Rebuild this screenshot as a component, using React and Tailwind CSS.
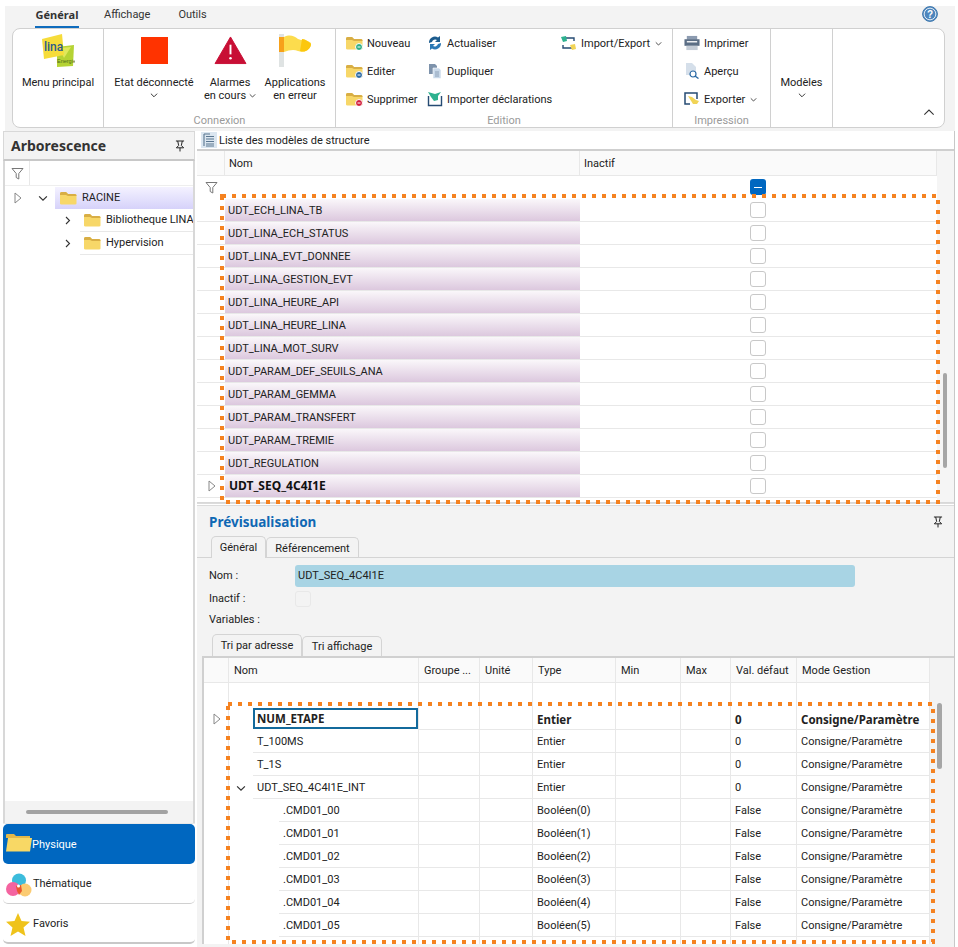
import React from "react";

const Folder = ({ className = "w-[17px] h-[14px] shrink-0", badge }) => (
  <svg viewBox="0 0 17 14" className={className}>
    <path d="M0 2.5 Q0 1 1.5 1 H6 L8 3 H15 Q16.5 3 16.5 4.5 V12.5 Q16.5 13.5 15 13.5 H1.5 Q0 13.5 0 12.5 Z" fill="#f7d768" />
    <path d="M0 2.5 Q0 1 1.5 1 H6 L8 3 H15 Q16.5 3 16.5 4.5 V5 H8 L6 4 H0 Z" fill="#d8ae45" />
    {badge && <circle cx="13" cy="11" r="3.5" fill={badge} stroke="#fff" strokeWidth="1" />}
    {badge && <path d="M11.5 11 H14.5" stroke="#fff" strokeWidth="1" />}
  </svg>
);

const Chevron = ({ className = "w-[9px] h-[9px]", dir = "down", sw = 1.1 }) => {
  const d = { down: "M1 3 L4.5 6.5 L8 3", up: "M1 6.5 L4.5 3 L8 6.5", right: "M3 1 L6.5 4.5 L3 8" }[dir];
  return (
    <svg viewBox="0 0 9 9" className={className}>
      <path d={d} fill="none" stroke="#333" strokeWidth={sw} />
    </svg>
  );
};

const Tri = () => (
  <svg viewBox="0 0 8 12" className="w-[8px] h-[12px]">
    <path d="M1 1 L7 6 L1 11 Z" fill="#fff" stroke="#888" strokeWidth="1" />
  </svg>
);

const Funnel = () => (
  <svg viewBox="0 0 13 13" className="w-[13px] h-[13px]">
    <path d="M1 1.5 H12 L7.8 6.5 V12 L5.2 10.5 V6.5 Z" fill="#fff" stroke="#777" strokeWidth="1" />
  </svg>
);

const Pin = () => (
  <svg viewBox="0 0 11 13" className="w-[10px] h-[12px]">
    <path d="M1 1 H10 M3 1 L4 6 L1.5 8.5 H9.5 L7 6 L8 1 M5.5 8.5 V12.5" fill="none" stroke="#222" strokeWidth="1.1" />
  </svg>
);

const Check = ({ light }) => (
  <span className={`block w-[16px] h-[16px] rounded-[3px] border ${light ? "border-[#e8e8e8]" : "border-[#c8c8c8] bg-white"}`} />
);

const LinaLogo = () => (
  <svg viewBox="0 0 34 34" className="w-[34px] h-[34px]">
    <path d="M16 13 L33 11 L32 32 L16 33 Z" fill="#b5d334" />
    <path d="M18 14 L30 13 L23 24 Z" fill="#dfe85b" />
    <path d="M1 5 L21 0 L23 21 L3 25 Z" fill="#f6dc3a" />
    <text x="3" y="17" fontSize="12" fontWeight="500" fill="#2a5a8c" fontFamily="Roboto, sans-serif">lina</text>
    <text x="16" y="29" fontSize="5.5" fill="#4f6b1a" fontFamily="Liberation Sans, sans-serif">Energie</text>
  </svg>
);

const AlarmIcon = () => (
  <svg viewBox="0 0 34 30" className="w-[33px] h-[29px]">
    <path d="M17 1 L33 28.5 H1 Z" fill="#c80f35" stroke="#c80f35" strokeLinejoin="round" />
    <path d="M17 9 V19" stroke="#fff" strokeWidth="2" />
    <circle cx="17" cy="23" r="1.3" fill="#fff" />
  </svg>
);

const FlagIcon = () => (
  <svg viewBox="0 0 34 34" className="w-[34px] h-[34px]">
    <rect x="1" y="1" width="5" height="33" fill="#dfe3e3" />
    <path d="M1 4 H6 V19 H1 Z" fill="#f7a11a" />
    <path d="M6 4 C12 1 16 3 20 6 C24 8 28 6 33 10 V13 C30 18 25 20 20 18 C16 16 11 17 6 19 Z" fill="#fcdc4d" />
    <path d="M24 6 C27 6 30 8 33 11 C32 17 27 20 22 18 Z" fill="#fcc70d" />
  </svg>
);

const RefreshIcon = () => (
  <svg viewBox="0 0 16 16" className="w-[16px] h-[16px]">
    <path d="M2 8 A6 6 0 0 1 11 2.5 L13 1 V7 H8 L10 5 A3.5 3.5 0 0 0 5 7 Z" fill="#1c5c8e" />
    <path d="M14 8 A6 6 0 0 1 5 13.5 L3 15 V9 H8 L6 11 A3.5 3.5 0 0 0 11 9 Z" fill="#2a78b5" />
  </svg>
);

const DupIcon = () => (
  <svg viewBox="0 0 16 16" className="w-[16px] h-[16px]">
    <path d="M2 1 H8 L10 3 V11 H2 Z" fill="#7d92ab" />
    <path d="M6 5 H12 L14 7 V15.5 H6 Z" fill="#c9d9ea" stroke="#fff" strokeWidth=".6" />
    <path d="M8 9 H12 M8 11 H12 M8 13 H12" stroke="#7d92ab" strokeWidth=".8" />
  </svg>
);

const ImportDeclIcon = () => (
  <svg viewBox="0 0 16 16" className="w-[16px] h-[16px]">
    <path d="M1.5 5 V14.5 H14.5 V5" fill="none" stroke="#264b73" strokeWidth="1.4" />
    <path d="M1 1 L8 3 L14 1 L11 5 V9 L7 10 L4 6 Z" fill="#2eb18f" />
  </svg>
);

const ImpExpIcon = () => (
  <svg viewBox="0 0 17 16" className="w-[17px] h-[16px]">
    <path d="M5 3 H14 V6 M12 13 H3 V10" fill="none" stroke="#264b73" strokeWidth="1.4" />
    <path d="M1 2 L6 1 L7 6 L3 7 Z" fill="#2eb18f" />
    <path d="M10 10 L15 9 L16 14 L12 15 Z" fill="#f1d456" />
  </svg>
);

const PrintIcon = () => (
  <svg viewBox="0 0 17 16" className="w-[16px] h-[16px]">
    <rect x="3" y="0.5" width="11" height="4" fill="#8c9bb0" />
    <rect x="0.5" y="4" width="16" height="7" fill="#5b6e85" />
    <rect x="3" y="6" width="11" height="1.4" fill="#fff" />
    <rect x="2.5" y="11" width="12" height="4.5" fill="#c4ccd6" />
  </svg>
);

const PreviewIcon = () => (
  <svg viewBox="0 0 16 16" className="w-[16px] h-[16px]">
    <path d="M2 0 H8 L12 4 V12 H2 Z" fill="#d5dfea" />
    <circle cx="9" cy="11" r="3" fill="#fff" stroke="#2c6aa5" strokeWidth="1.2" />
    <path d="M11 13 L14.5 15.5" stroke="#2c6aa5" strokeWidth="1.4" />
  </svg>
);

const ExportIcon = () => (
  <svg viewBox="0 0 17 16" className="w-[17px] h-[16px]">
    <path d="M14 8 V2 H2 V13 H7" fill="none" stroke="#264b73" strokeWidth="1.5" />
    <path d="M5 5 L9 6 L13 9 L16 10 L14 13 L10 13 Z" fill="#f1d456" />
  </svg>
);

const ListIcon = () => (
  <span className="w-[16px] h-[16px] bg-[#dbe6f0] flex items-center justify-center shrink-0">
    <svg viewBox="0 0 12 14" className="w-[12px] h-[14px]">
      <path d="M1 1 H7 M3 3.5 H11 M3 6 H11 M3 8.5 H11 M3 11 H11 M3 13 H11 M1 1 V13" stroke="#5a7690" strokeWidth="1.1" fill="none" />
    </svg>
  </span>
);

const HelpIcon = () => (
  <svg viewBox="0 0 16 16" className="w-[16px] h-[16px]">
    <circle cx="8" cy="8" r="7.4" fill="#5b8fc2" stroke="#3b76ad" />
    <circle cx="8" cy="8" r="5.8" fill="#4d86bd" stroke="#fff" strokeWidth=".8" />
    <text x="8" y="11.6" textAnchor="middle" fontSize="10" fontWeight="700" fill="#fff" fontFamily="Liberation Sans, sans-serif">?</text>
  </svg>
);

const ThemeIcon = () => (
  <svg viewBox="0 0 26 24" className="w-[26px] h-[24px]">
    <circle cx="13" cy="7.5" r="7" fill="#3cbcdc" />
    <circle cx="7" cy="16" r="7" fill="#f464a0" />
    <circle cx="19" cy="17" r="6.5" fill="#fbcb72" />
    <path d="M10 13 L15 12 L16 18 L13 22 L11 18 Z" fill="#e9562f" />
    <circle cx="12.5" cy="13" r="1.5" fill="#fff" />
  </svg>
);

const StarIcon = () => (
  <svg viewBox="0 0 24 23" className="w-[24px] h-[23px]">
    <path d="M12 0 L15.5 8 L24 8.7 L17.5 14.4 L19.5 23 L12 18.5 L4.5 23 L6.5 14.4 L0 8.7 L8.5 8 Z" fill="#efc31b" />
  </svg>
);

const SmallBtn = ({ icon, label, caret }) => (
  <div className="h-[28px] flex items-center gap-[4px] whitespace-nowrap">
    <span className="w-[17px] flex justify-center shrink-0">{icon}</span>
    <span className="pt-[2px]">{label}</span>
    {caret && <Chevron className="w-[7px] h-[7px] ml-[1px]" />}
  </div>
);

const Group = ({ w, label, children, last }) => (
  <div className={`${w} shrink-0 flex flex-col h-full ${last ? "" : "border-r border-[#d0d0d0]"}`}>
    <div className="flex-1 min-h-0">{children}</div>
    <div className="h-[14px] text-center text-[#9a9a9a] leading-[15px]">{label}</div>
  </div>
);

const BigBtn = ({ w, icon, children }) => (
  <div className={`${w} shrink-0 flex flex-col items-center`}>
    <div className="h-[40px] mt-[1px] flex items-center justify-center">{icon}</div>
    <div className="mt-[6px] text-center leading-[13px] whitespace-nowrap">{children}</div>
  </div>
);

const upper = ["UDT_ECH_LINA_TB","UDT_LINA_ECH_STATUS","UDT_LINA_EVT_DONNEE","UDT_LINA_GESTION_EVT","UDT_LINA_HEURE_API","UDT_LINA_HEURE_LINA","UDT_LINA_MOT_SURV","UDT_PARAM_DEF_SEUILS_ANA","UDT_PARAM_GEMMA","UDT_PARAM_TRANSFERT","UDT_PARAM_TREMIE","UDT_REGULATION","UDT_SEQ_4C4I1E"];

const upperCols = "w-[740px] grid grid-cols-[28px_355px_357px]";
const lowerCols = "w-[726px] grid grid-cols-[25px_190px_61px_53px_83px_65px_50px_66px_133px]";
const lower = [
  { n: "NUM_ETAPE", t: "Entier", v: "0", b: true, sel: true },
  { n: "T_100MS", t: "Entier", v: "0" },
  { n: "T_1S", t: "Entier", v: "0" },
  { n: "UDT_SEQ_4C4I1E_INT", t: "Entier", v: "0", open: true },
  { n: ".CMD01_00", t: "Booléen(0)", v: "False", sub: true },
  { n: ".CMD01_01", t: "Booléen(1)", v: "False", sub: true },
  { n: ".CMD01_02", t: "Booléen(2)", v: "False", sub: true },
  { n: ".CMD01_03", t: "Booléen(3)", v: "False", sub: true },
  { n: ".CMD01_04", t: "Booléen(4)", v: "False", sub: true },
  { n: ".CMD01_05", t: "Booléen(5)", v: "False", sub: true },
  { n: "", t: "", v: "", sub: true },
];

const Annot = ({ x, y, w, h }) => (
  <svg className="absolute pointer-events-none" style={{ left: x, top: y }} width={w + 6} height={h + 6}>
    <rect x="3" y="3" width={w} height={h} fill="none" stroke="#f58220" strokeWidth="4" strokeDasharray="4 6" />
  </svg>
);

const Cell = ({ children, className = "" }) => (
  <div className={`border-r border-[#e8e8e8] px-[4px] pt-[2px] flex items-center whitespace-nowrap overflow-hidden ${className}`}>{children}</div>
);

const bold = "font-['Noto_Sans',sans-serif] font-bold";

export default function App() {
  return (
    <div className="relative w-[958px] h-[947px] overflow-hidden bg-white pt-[6px] text-[11px] text-[#222] font-['Roboto',sans-serif]">
      <div className="ml-[5px] mr-[3px] bg-[#f3f3f3] h-[125px] pl-[7px] pr-[10px] flex flex-col">
        <div className="h-[22px] flex items-start relative text-[#333]">
          <div className={`ml-[23px] w-[44px] h-[22px] text-center leading-[17px] border-b-[2px] border-[#0f6cbd] ${bold}`}>Général</div>
          <div className="ml-[25px] leading-[17px]">Affichage</div>
          <div className="ml-[28px] leading-[17px]">Outils</div>
          <div className="absolute right-[7px] top-0"><HelpIcon /></div>
        </div>
        <div className="h-[100px] bg-white border border-[#d0d0d0] rounded-[8px] flex relative">
          <Group w="w-[91px]" last={false}>
            <div className="flex flex-col items-center">
              <div className="h-[40px] mt-[2px] flex items-center"><LinaLogo /></div>
              <div className="mt-[5px] leading-[13px]">Menu principal</div>
            </div>
          </Group>
          <Group w="w-[232px]" label="Connexion">
            <div className="flex">
              <BigBtn w="w-[100px]" icon={<span className="block w-[27px] h-[27px] bg-[#ff3300]" />}>
                Etat déconnecté
                <div className="flex justify-center mt-[2px]"><Chevron className="w-[8px] h-[8px]" /></div>
              </BigBtn>
              <BigBtn w="w-[52px]" icon={<AlarmIcon />}>
                Alarmes<br />
                <span className="whitespace-nowrap inline-flex items-center gap-[3px]">en cours <Chevron className="w-[7px] h-[7px]" /></span>
              </BigBtn>
              <BigBtn w="w-[78px]" icon={<FlagIcon />}>Applications<br />en erreur</BigBtn>
            </div>
          </Group>
          <Group w="w-[337px]" label="Edition">
            <div className="flex pl-[10px]">
              <div className="w-[80px]">
                <SmallBtn icon={<Folder badge="#2cae85" />} label="Nouveau" />
                <SmallBtn icon={<Folder badge="#2c6aa5" />} label="Editer" />
                <SmallBtn icon={<Folder badge="#d21f3c" />} label="Supprimer" />
              </div>
              <div className="w-[134px]">
                <SmallBtn icon={<RefreshIcon />} label="Actualiser" />
                <SmallBtn icon={<DupIcon />} label="Dupliquer" />
                <SmallBtn icon={<ImportDeclIcon />} label="Importer déclarations" />
              </div>
              <div>
                <SmallBtn icon={<ImpExpIcon />} label="Import/Export" caret />
              </div>
            </div>
          </Group>
          <Group w="w-[98px]" label="Impression">
            <div className="pl-[10px]">
              <SmallBtn icon={<PrintIcon />} label="Imprimer" />
              <SmallBtn icon={<PreviewIcon />} label="Aperçu" />
              <SmallBtn icon={<ExportIcon />} label="Exporter" caret />
            </div>
          </Group>
          <Group w="w-[62px]">
            <div className="text-center pt-[47px] leading-[13px]">
              Modèles
              <div className="flex justify-center mt-[2px]"><Chevron className="w-[8px] h-[8px]" /></div>
            </div>
          </Group>
          <div className="absolute right-[9px] bottom-[9px]"><Chevron className="w-[12px] h-[12px]" dir="up" sw={0.8} /></div>
        </div>
      </div>

      <div className="flex h-[816px] pl-[3px]">
        {/* left */}
        <div className="w-[192px] shrink-0 flex flex-col">
          <div className="h-[30px] border border-[#d8d8d8] border-b-[2px] border-b-[#c8c8c8] bg-[#f3f3f3] flex items-center justify-between pl-[7px] pr-[9px]">
            <span className={`text-[14px] text-[#333] ${bold}`}>Arborescence</span>
            <Pin />
          </div>
          <div className="h-[640px] border-x-[2px] border-[#d8d8d8] bg-white">
            <div className="h-[25px] flex border-b border-[#eeeeee]">
              <div className="w-[25px] border-r border-[#e8e8e8] flex items-center justify-center"><Funnel /></div>
            </div>
            <div className="h-[23px] flex items-center">
              <div className="w-[25px] flex justify-center"><Tri /></div>
              <div className="w-[25px] flex justify-center"><Chevron className="w-[10px] h-[10px]" /></div>
              <div className="flex-1 h-[22px] flex items-center gap-[5px] pl-[5px] bg-linear-to-b from-[#f4f2ff] to-[#d6d2fa]">
                <Folder />
                <span className="pt-[1px]">RACINE</span>
              </div>
            </div>
            {["Bibliotheque LINA", "Hypervision"].map((t) => (
              <div key={t} className="h-[23px] flex items-center">
                <div className="w-[55px] shrink-0" />
                <div className="w-[15px] flex justify-center shrink-0"><Chevron className="w-[9px] h-[9px]" dir="right" /></div>
                <div className="ml-[5px] pl-[4px] flex-1 h-full flex items-center gap-[5px] border-b border-[#e8e8e8] whitespace-nowrap overflow-hidden">
                  <Folder />
                  <span className="pt-[1px]">{t}</span>
                </div>
              </div>
            ))}
          </div>
          <div className="h-[22px] bg-[#f3f3f3] border-x-[2px] border-[#d8d8d8] flex items-center pl-[21px] pr-[25px]">
            <div className="h-[4px] w-full rounded-full bg-[#a2a2a2]" />
          </div>
          <div className="h-[1px] bg-[#e8e8e8]" />
          <div className="h-[40px] bg-[#0067c0] rounded-[5px] flex items-center gap-[0px] text-white pl-[3px]">
            <svg viewBox="0 0 26 18" className="w-[26px] h-[18px] mb-[3px]">
              <path d="M0 1 Q0 0 1 0 H8 L10 2 H24 V4 H0 Z" fill="#e2b84a" />
              <path d="M2 4 H26 L24 17.5 H0 Z" fill="#f8d865" />
            </svg>
            <span className="pt-[2px]">Physique</span>
          </div>
          <div className="h-[40px] pt-[2px] bg-white rounded-[5px] border-b border-[#d0d0d0] flex items-center gap-[1px] pl-[3px]"><ThemeIcon /><span>Thématique</span></div>
          <div className="h-[40px] pt-[2px] bg-white rounded-[5px] border-b-[2px] border-[#c8c8c8] flex items-center gap-[3px] pl-[3px]"><StarIcon /><span>Favoris</span></div>
        </div>

        {/* right */}
        <div className="w-[758px] ml-[2px] shrink-0 flex flex-col bg-white border-r border-[#c8c8c8]">
          <div className="h-[20px] flex items-center gap-[2px] pl-[4px] border-b-[2px] border-[#cfcfcf] bg-white">
            <ListIcon />
            <span className="pt-[2px]">Liste des modèles de structure</span>
          </div>
          <div className="h-[352px] overflow-hidden relative border-b border-[#d8d8d8] bg-[#f5f5f5]">
            <div className={`${upperCols} h-[25px] border-b border-[#e8e8e8] bg-[#fafafa]`}>
              <Cell />
              <Cell>Nom</Cell>
              <Cell>Inactif</Cell>
            </div>
            <div className={`${upperCols} h-[23px] bg-white`}>
              <div className="flex items-center justify-center"><Funnel /></div>
              <div />
              <div className="flex justify-center pt-[3px] pr-[2px]">
                <span className="w-[16px] h-[16px] rounded-[3px] bg-[#0067c0] flex items-center justify-center"><span className="w-[8px] h-[1px] bg-white" /></span>
              </div>
            </div>
            {upper.map((n, i) => {
              const last = i === upper.length - 1;
              return (
                <div key={n} className={`${upperCols} h-[23px] border-b border-[#e8e8e8] bg-white`}>
                  <div className="flex items-center justify-center pl-[2px]">{last && <Tri />}</div>
                  <div className={`bg-linear-to-b from-[#faf7fa] to-[#dcc8de] flex items-center px-[3px] whitespace-nowrap ${last ? `text-[12px] pl-[4px] text-[#111] ${bold}` : "pt-[2px]"}`}>{n}</div>
                  <div className="flex items-center justify-center pr-[2px]"><Check /></div>
                </div>
              );
            })}
            <div className="w-[740px] h-[20px] bg-white" />
            <div className="absolute right-[7px] top-[222px] w-[4px] h-[95px] bg-[#a6a6a6] rounded-full" />
          </div>
          <div className="h-[1px] bg-[#dcdcdc]" />
          <div className="flex-1 min-h-0 bg-[#f3f3f3] flex flex-col border-t border-[#dcdcdc] mt-[1px]">
            <div className="h-[31px] flex items-center justify-between pl-[12px] pr-[11px] pt-[1px]">
              <span className={`text-[13.5px] text-[#0f68b4] ${bold}`}>Prévisualisation</span>
              <Pin />
            </div>
            <div className="h-[21px] flex items-end pl-[14px] border-b border-[#d4d4d4]">
              <div className="w-[55px] h-[22px] border border-b-0 border-[#d4d4d4] rounded-t-[5px] text-center leading-[21px] bg-[#f3f3f3] -mb-[1px]">Général</div>
              <div className="w-[93px] h-[20px] border border-b-0 border-[#d4d4d4] rounded-t-[5px] text-center leading-[21px]">Référencement</div>
            </div>
            <div className="h-[76px] relative pl-[12px] pt-[7px]">
              <div className="flex items-center h-[22px]">
                <span className="w-[86px]">Nom :</span>
                <div className="w-[560px] h-[22px] bg-[#a8d4e4] rounded-[3px] pl-[3px] pt-[1px] flex items-center">UDT_SEQ_4C4I1E</div>
              </div>
              <div className="flex items-center h-[23px]">
                <span className="w-[86px] pt-[2px]">Inactif :</span>
                <Check light />
              </div>
              <div className="flex items-center h-[18px] pt-[2px]">Variables :</div>
            </div>
            <div className="h-[22px] flex items-end pl-[15px]">
              <div className="w-[90px] h-[22px] border border-b-0 border-[#d4d4d4] rounded-t-[5px] text-center leading-[21px]">Tri par adresse</div>
              <div className="w-[80px] h-[20px] border border-b-0 border-[#d4d4d4] rounded-t-[5px] text-center leading-[19px]">Tri affichage</div>
            </div>
            <div className="flex-1 min-h-0 ml-[5px] mb-[3px] border-t-[2px] border-l-[2px] border-[#d0d0d0] bg-[#f3f3f3] overflow-hidden relative">
              <div className={`${lowerCols} h-[25px] border-b border-[#e8e8e8] bg-[#fafafa]`}>
                <Cell />
                {["Nom", "Groupe ...", "Unité", "Type", "Min", "Max", "Val. défaut", "Mode Gestion"].map((h) => (
                  <Cell key={h} className="pl-[5px]">{h}</Cell>
                ))}
              </div>
              <div className={`${lowerCols} h-[24px] bg-white`}>
                {[...Array(9)].map((_, i) => <Cell key={i} />)}
              </div>
              {lower.map((r, i) => (
                <div key={i} className={`${lowerCols} h-[23px] bg-white ${r.b ? `text-[11.5px] ${bold}` : ""}`}>
                  <div className="border-r border-[#e8e8e8] flex items-center justify-center pl-[2px]">{r.sel && <Tri />}</div>
                  <div className="border-r border-[#e8e8e8] flex items-stretch">
                    {r.sel ? (
                      <div className="ml-[24px] mr-0 my-[1px] flex-1 border-[2px] border-[#136a9c] flex items-center pl-[2px]">{r.n}</div>
                    ) : r.sub ? (
                      <div className="ml-[50px] flex-1 border-b border-[#e8e8e8] pt-[2px] flex items-center pl-[4px]">{r.n}</div>
                    ) : (
                      <>
                        <div className="w-[24px] flex items-center justify-center">{r.open && <Chevron className="w-[10px] h-[10px]" />}</div>
                        <div className="flex-1 border-b border-[#e8e8e8] pt-[2px] flex items-center pl-[4px]">{r.n}</div>
                      </>
                    )}
                  </div>
                  <Cell className="border-b" />
                  <Cell className="border-b" />
                  <Cell className="border-b">{r.t}</Cell>
                  <Cell className="border-b" />
                  <Cell className="border-b" />
                  <Cell className="border-b">{r.v}</Cell>
                  <Cell className="border-b">{r.v ? "Consigne/Paramètre" : ""}</Cell>
                </div>
              ))}
              <div className="absolute right-[12px] top-[45px] w-[5px] h-[66px] bg-[#a6a6a6] rounded-full" />
            </div>
          </div>
        </div>
      </div>

      <Annot x={219} y={193} w={716} h={306} />
      <Annot x={225} y={701} w={705} h={238} />
    </div>
  );
}
